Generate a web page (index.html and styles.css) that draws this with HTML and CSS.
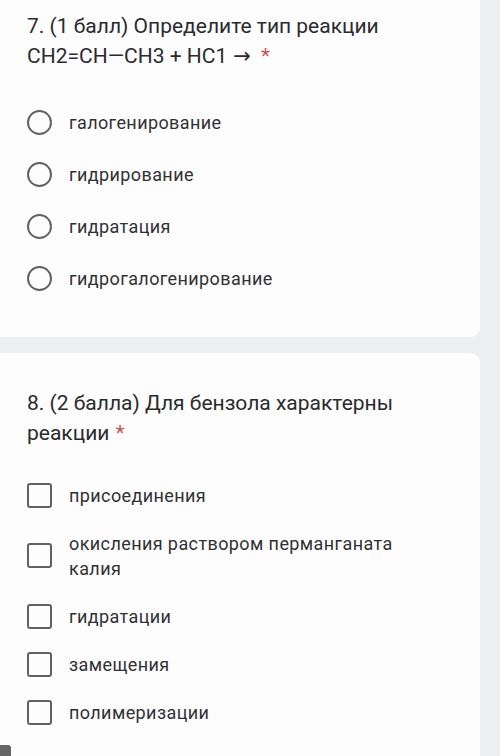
FILE: index.html
```html
<!DOCTYPE html>
<html lang="ru">
<head>
<meta charset="utf-8">
<link rel="stylesheet" href="styles.css">
</head>
<body>
<div class="page">
  <section class="card card-first">
    <div class="title">7. (1 балл) Определите тип реакции CH2=CH—CH3 + HC1<span class="arrow">→</span><span class="req req-after-arrow">*</span></div>
    <ul class="options radios">
      <li class="opt"><span class="radio"></span><span class="label">галогенирование</span></li>
      <li class="opt"><span class="radio"></span><span class="label">гидрирование</span></li>
      <li class="opt"><span class="radio"></span><span class="label">гидратация</span></li>
      <li class="opt"><span class="radio"></span><span class="label">гидрогалогенирование</span></li>
    </ul>
  </section>
  <section class="card card-second">
    <div class="title">8. (2 балла) Для бензола характерны реакции<span class="req req-after-word">*</span></div>
    <ul class="options checks">
      <li class="opt"><span class="check"></span><span class="label">присоединения</span></li>
      <li class="opt"><span class="check"></span><span class="label">окисления раствором перманганата калия</span></li>
      <li class="opt"><span class="check"></span><span class="label">гидратации</span></li>
      <li class="opt"><span class="check"></span><span class="label">замещения</span></li>
      <li class="opt"><span class="check"></span><span class="label">полимеризации</span></li>
    </ul>
  </section>
  <div class="corner"></div>
</div>
</body>
</html>
```

FILE: styles.css
```css
html, body {
  margin: 0;
  padding: 0;
}
body {
  background: #eceef1;
  font-family: Roboto, "Liberation Sans", sans-serif;
  color: #2a2b2e;
  width: 500px;
  height: 756px;
  overflow: hidden;
}
.page {
  position: relative;
  width: 500px;
  height: 756px;
  display: flex;
  flex-direction: column;
  gap: 16px;
}
.card {
  width: 480px;
  background: #fdfdfd;
  box-sizing: border-box;
  padding-left: 27px;
  padding-right: 20px;
}
.card-first {
  height: 337px;
  padding-top: 11px;
  border-radius: 0 0 9px 0;
}
.card-second {
  flex: 1;
  padding-top: 35px;
  border-radius: 0 9px 0 0;
}
.title {
  font-size: 21px;
  line-height: 30px;
  color: #2a2b2e;
  padding-right: 60px;
}
.arrow {
  font-family: "DejaVu Sans", sans-serif;
  font-size: 21px;
  line-height: 1;
  margin-left: 6px;
}
.req {
  color: #c9564f;
}
.req-after-arrow {
  margin-left: 10px;
}
.req-after-word {
  margin-left: 6px;
}
.options {
  list-style: none;
  margin: 0;
  padding: 0;
}
.radios {
  margin-top: 25px;
}
.checks {
  margin-top: 23px;
}
.opt {
  display: flex;
  align-items: center;
  gap: 17px;
  font-size: 18px;
  letter-spacing: 0.4px;
  line-height: 25px;
  color: #303134;
}
.radios .opt {
  padding: 13.5px 0;
}
.checks .opt {
  padding: 11.5px 0;
}
.label {
  flex: 1;
  padding-right: 40px;
}
.radio {
  flex: none;
  width: 25px;
  height: 25px;
  box-sizing: border-box;
  border: 2.5px solid #5f6368;
  border-radius: 50%;
}
.check {
  flex: none;
  width: 25px;
  height: 25px;
  box-sizing: border-box;
  border: 2.5px solid #5f6368;
  border-radius: 3px;
}
.corner {
  position: absolute;
  left: 0;
  bottom: 0;
  width: 11px;
  height: 11px;
  background: #666;
  border-radius: 0 3px 0 0;
}
```
